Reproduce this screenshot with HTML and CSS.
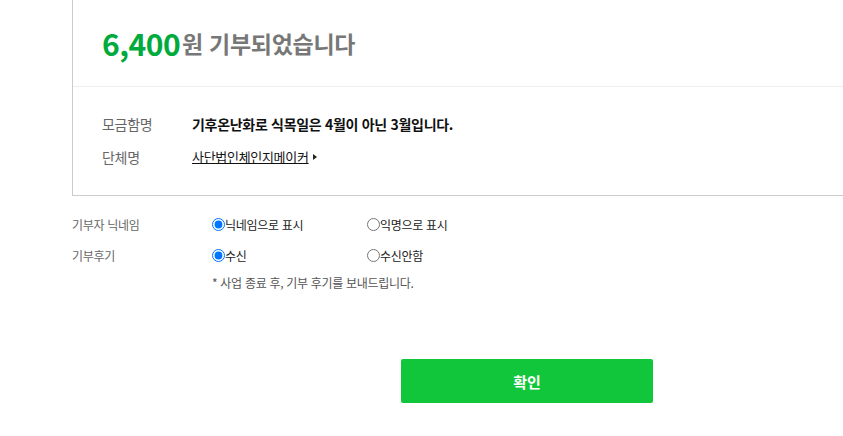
FILE: index.html
```html
<!DOCTYPE html>
<html lang="ko">
<head>
    <meta charset="UTF-8">
    <title>기부 완료</title>
    <link rel="stylesheet" href="styles.css">
</head>
<body>
    <!-- 기부 결과 박스 -->
    <div class="result-box">
        <div class="result-head">
            <span class="amount">6,400</span><span class="amount-text">원 기부되었습니다</span>
        </div>
        <div class="result-body">
            <div class="info-row">
                <span class="info-label">모금함명</span>
                <strong class="info-value">기후온난화로 식목일은 4월이 아닌 3월입니다.</strong>
            </div>
            <div class="info-row">
                <span class="info-label">단체명</span>
                <a class="info-link" href="#">사단법인체인지메이커</a><span class="arrow"></span>
            </div>
        </div>
    </div>

    <!-- 옵션 -->
    <div class="options">
        <div class="opt-row">
            <span class="opt-label">기부자 닉네임</span>
            <label class="opt-choice"><input type="radio" name="nick" checked>닉네임으로 표시</label>
            <label class="opt-choice"><input type="radio" name="nick">익명으로 표시</label>
        </div>
        <div class="opt-row">
            <span class="opt-label">기부후기</span>
            <label class="opt-choice"><input type="radio" name="review" checked>수신</label>
            <label class="opt-choice"><input type="radio" name="review">수신안함</label>
        </div>
        <p class="opt-note">* 사업 종료 후, 기부 후기를 보내드립니다.</p>
    </div>

    <div class="actions">
        <button class="btn-ok">확인</button>
    </div>
</body>
</html>
```

FILE: styles.css
```css
/* 전체 */
body {
    margin: 0;
    font-family: 'Noto Sans CJK KR', 'Noto Sans', sans-serif;
    color: #333;
    background: #fff;
    overflow: hidden;
}

/* 결과 박스 */
.result-box {
    margin-left: 72px;
    width: 820px;
    border-left: 1px solid #ccc;
    border-bottom: 1px solid #ccc;
    border-right: 1px solid #ccc;
}

.result-head {
    height: 86px;
    padding-left: 29px;
    display: flex;
    align-items: center;
    border-bottom: 1px solid #eee;
}

.amount {
    font-size: 30px;
    font-weight: bold;
    color: #00aa3c;
    letter-spacing: -0.5px;
}

.amount-text {
    font-size: 23px;
    font-weight: bold;
    color: #777;
    margin-left: 2px;
    letter-spacing: -0.3px;
}

.result-body {
    padding: 20px 0 22px 29px;
}

.info-row {
    display: flex;
    align-items: center;
    height: 33px;
    font-size: 14px;
    letter-spacing: -0.3px;
}

.info-label {
    width: 90px;
    color: #666;
}

.info-value {
    color: #111;
    font-weight: bold;
}

.info-link {
    color: #111;
    font-size: 13px;
    text-decoration: underline;
}

.arrow {
    display: inline-block;
    margin-left: 4px;
    border-left: 4px solid #222;
    border-top: 3px solid transparent;
    border-bottom: 3px solid transparent;
}

/* 옵션 */
.options {
    margin: 13px 0 0 72px;
    font-size: 12px;
    letter-spacing: -0.3px;
}

.opt-row {
    display: flex;
    align-items: center;
    height: 31px;
}

.opt-label {
    width: 140px;
    color: #666;
}

.opt-choice {
    width: 155px;
    display: flex;
    align-items: center;
    color: #222;
}

.opt-choice input {
    margin: 0;
    width: 13px;
    height: 13px;
}

.opt-note {
    margin: 3px 0 0 140px;
    color: #555;
}

/* 확인 버튼 */
.actions {
    margin-top: 68px;
    padding-left: 401px;
}

.btn-ok {
    width: 252px;
    height: 44px;
    border: 0;
    border-radius: 2px;
    background-color: #12c63b;
    color: #fff;
    font-family: inherit;
    font-size: 15px;
    font-weight: bold;
    cursor: pointer;
}
```
